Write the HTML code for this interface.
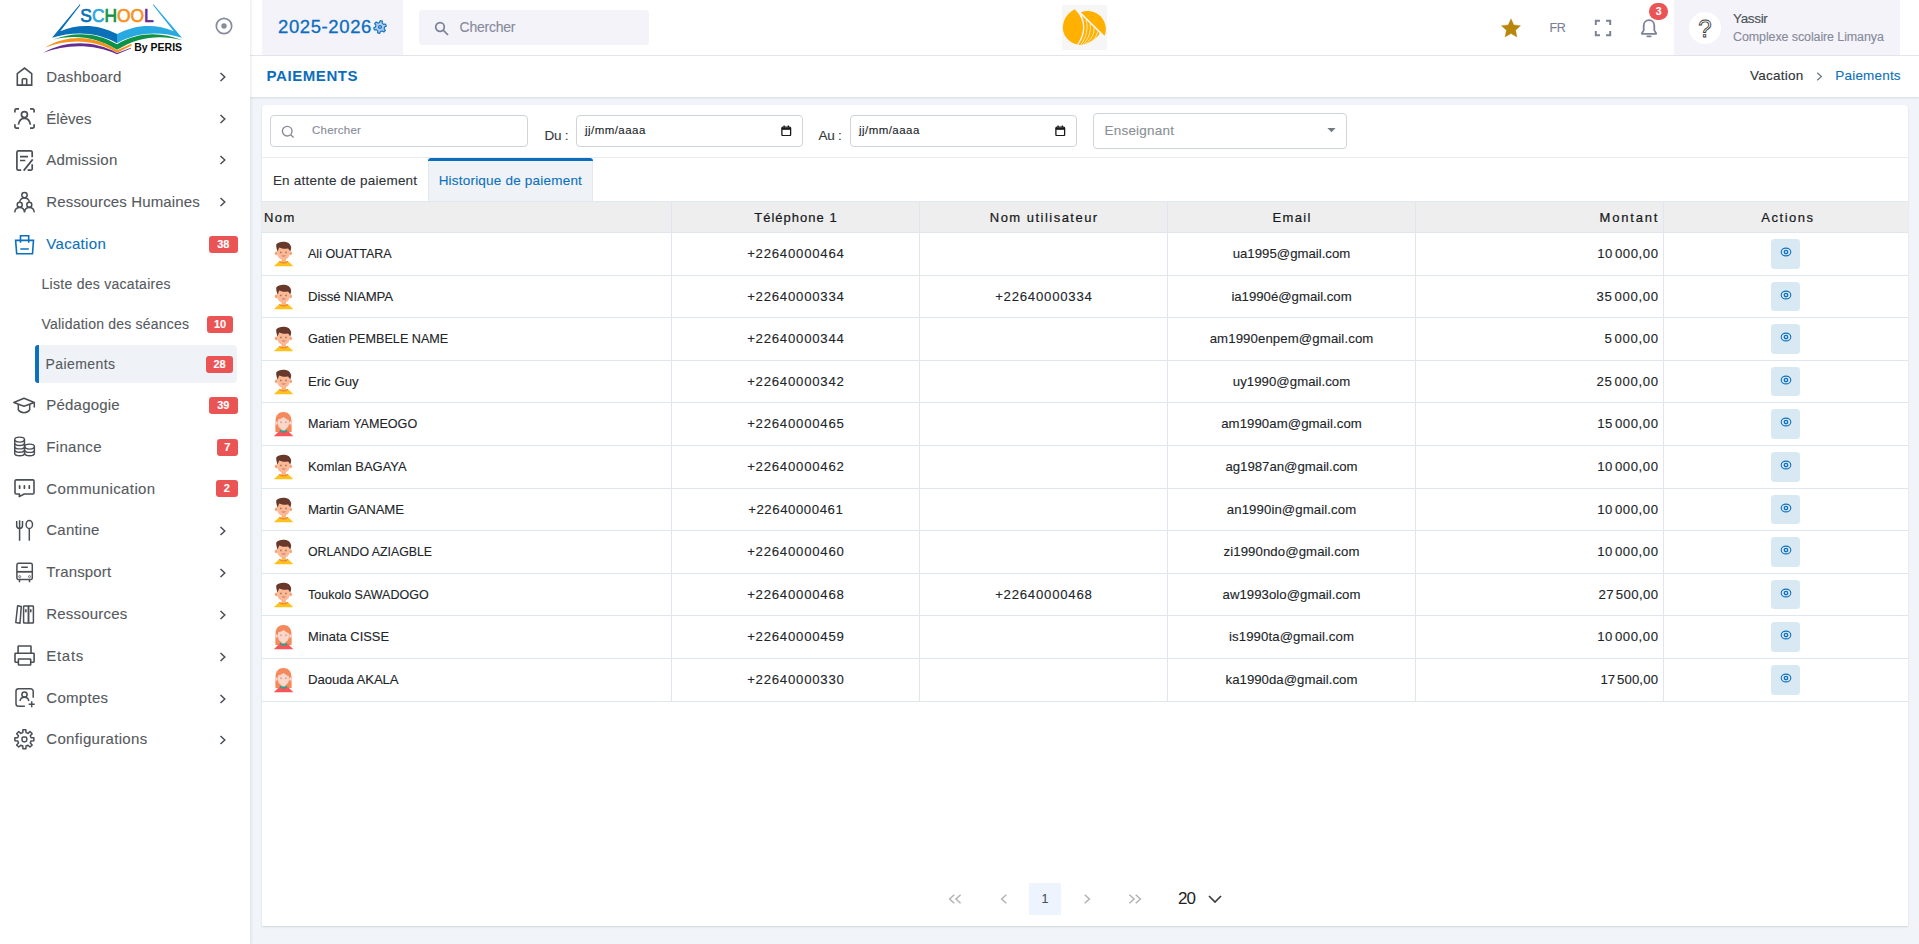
<!DOCTYPE html>
<html lang="fr"><head>
<meta charset="utf-8">
<title>Paiements</title>
<style>
*{box-sizing:border-box;margin:0;padding:0}
html,body{width:1919px;height:944px;overflow:hidden}
body{-webkit-text-stroke:.12px;font-family:"Liberation Sans",sans-serif;background:#f1f5f9;color:#333;position:relative;font-size:14px}
svg{display:block}
/* ---------- sidebar ---------- */
#sidebar{position:absolute;left:0;top:0;width:250px;height:944px;background:#fff;box-shadow:1px 0 3px rgba(56,65,74,.12);z-index:5}
#logo{position:absolute;left:40px;top:2px;width:146px;height:54px}
#toggle{position:absolute;left:213.500px;top:15.900px;width:20px;height:20px}
.nav{position:absolute;left:0;width:250px;height:42px}
.nav .ic{position:absolute;left:8px;top:3px;width:36px;height:36px;color:#4a4f55}
.nav .lb{position:absolute;left:46.300px;top:0;line-height:42px;font-size:15px;color:#565a60;white-space:nowrap;}
.nav .ch{position:absolute;left:219px;top:16px;width:8px;height:10px}
.nav.act .lb,.nav.act .ic{color:#0c71bc}
.bdg{position:absolute;background:#ea5455;color:#fff;font-weight:700;font-size:11px;line-height:17px;height:17px;border-radius:3px;text-align:center}
.sub{position:absolute;left:35px;width:202px;height:38px}
.sub .lb{position:absolute;left:6.500px;top:0;line-height:38px;font-size:14px;color:#565a60;white-space:nowrap;}
.sub.cur{background:#eff2f7;border-left:4px solid #0c71bc;border-radius:3px 4px 4px 3px}
/* ---------- header ---------- */
#header{position:absolute;left:250px;top:0;width:1669px;height:56px;background:#fff;border-bottom:1px solid #e4e8ee}
#year{position:absolute;left:12px;top:0;width:141px;height:55px;background:#f3f3f9}
#year .t{position:absolute;left:16px;top:0;line-height:54px;font-size:18.500px;color:#0c6dbf;-webkit-text-stroke:.3px #0c6dbf;white-space:nowrap}
#year svg{position:absolute;left:111px;top:20px;width:14px;height:14px}
#hsearch{position:absolute;left:169px;top:10px;width:230px;height:35px;background:#f3f3f9;border-radius:4px}
#hsearch svg{position:absolute;left:14.700px;top:11.300px;width:15px;height:15px}
#hsearch .t{position:absolute;left:40.5px;top:0;line-height:35px;font-size:14px;color:#878a99;}
#brand{position:absolute;left:812px;top:5px;width:45px;height:45px;background:#f6f6f6}
#star{position:absolute;left:1251px;top:18px;width:20px;height:20px}
#lang{position:absolute;left:1299.500px;top:0;line-height:57px;font-size:12.500px;color:#7c8293}
#fs{position:absolute;left:1343px;top:18px;width:20px;height:20px}
#bell{position:absolute;left:1389px;top:17px;width:20px;height:22px}
#bellb{position:absolute;left:1399px;top:3.100px;width:19.400px;height:16.600px;border-radius:8.300px;background:#ea5455;color:#fff;font-size:10.500px;font-weight:700;line-height:16px;text-align:center}
#user{position:absolute;left:1424px;top:0;width:226px;height:55px;background:#f3f3f9}
#user .av{position:absolute;left:15px;top:12px;width:32px;height:32px;border-radius:50%;background:#fff}
#user .n{position:absolute;left:59px;top:11px;font-size:13.5px;color:#4d5157;line-height:16px}
#user .s{position:absolute;left:59px;top:30px;font-size:12.5px;color:#878a99;line-height:15px;white-space:nowrap}
/* ---------- title bar ---------- */
#tbar{position:absolute;left:250px;top:56px;width:1669px;height:41px;background:#fff;box-shadow:0 1px 2px rgba(56,65,74,.15)}
#tbar h4{position:absolute;left:16.500px;top:0;line-height:39.500px;font-size:15px;font-weight:700;-webkit-text-stroke:0;color:#0c6dbd}
#crumb{position:absolute;left:0;top:0;width:1669px;height:40px;font-size:13.500px;color:#2f3337}
#crumb .c{position:absolute;top:0;line-height:39px;white-space:nowrap}
#crumb svg{position:absolute;left:1566.300px;top:15.500px;width:7px;height:9px}
#crumb b{font-weight:400;color:#0c71bc}
#crumb i{font-style:normal;color:#6c757d;margin:0 10px;font-size:12px}
/* ---------- card ---------- */
#card{position:absolute;left:262px;top:105px;width:1646px;height:821px;background:#fff;border-radius:4px 4px 0 0;box-shadow:0 1px 2px rgba(56,65,74,.18)}

#filters{position:absolute;left:0;top:0;width:1646px;height:53px;border-bottom:1px solid #e9ebee}
.inp{position:absolute;top:10px;height:32px;border:1px solid #ced4da;border-radius:4px;background:#fff}
.inp>svg{position:absolute;left:10px;top:9px;width:14px;height:14px}
.inp .ph{position:absolute;top:0;line-height:28px;font-size:11.500px;color:#878a99;}
.inp .dv{position:absolute;left:8px;top:0;line-height:28px;font-size:11.500px;color:#212529;letter-spacing:.25px}
.inp svg.cal{left:204px;top:8.500px;width:10.500px;height:11.500px}
.fl{position:absolute;top:22px;line-height:18px;font-size:13.500px;color:#33383d;white-space:nowrap}
.sel{position:absolute;left:831px;top:8px;width:254px;height:36px;border:1px solid #ced4da;border-radius:4px}
.sel span{position:absolute;left:10.500px;top:0;line-height:34px;font-size:13.500px;color:#8b8f96;letter-spacing:.25px}
.sel svg{position:absolute;left:233px;top:14px;width:9px;height:4.500px}
#tabs{position:absolute;left:0;top:53px;width:1646px;height:43.500px;border-bottom:1px solid #e3e6ea}
.tab{position:absolute;top:0;height:43px;line-height:45px;text-align:center;font-size:13.500px;color:#2f3337;white-space:nowrap;letter-spacing:.1px}
.tab.on{color:#0c71bc;background:#eff3f8;border-top:3px solid #0c6dbd;line-height:39px;border-radius:3px 3px 0 0;box-shadow:inset 1px 0 #e3e8ef,inset -1px 0 #e3e8ef}
#thead{position:absolute;left:0;top:96px;width:1646px;height:32px;background:#eee;border-top:1px solid #e3e8f0;border-bottom:1px solid #e0e6f0}
.th{position:absolute;top:0;height:30px;line-height:32px;text-align:center;font-size:13px;font-weight:400;-webkit-text-stroke:.22px #16181b;color:#16181b;border-right:1px solid #e0e6f0;white-space:nowrap}
#tbody{position:absolute;left:0;top:128px;width:1646px}
.tr{position:absolute;left:0;width:1646px;border-bottom:1px solid #e0e6f0}
.td{position:absolute;top:0;height:100%;text-align:center;font-size:13.200px;color:#212529;-webkit-text-stroke:.12px #212529;white-space:nowrap;border-right:1px solid #e0e6f0}
.c1{left:0;width:410px;text-align:left}.c2{left:410px;width:248px}.c3{left:658px;width:248px}.c4{left:906px;width:248px}.c5{left:1154px;width:248px;text-align:right;padding-right:5px;word-spacing:-2.200px}.c6{left:1402px;width:244px;border-right:0}
.avt{position:absolute;left:10px;top:calc(50% - 14px);width:24px;height:28px}
.nm{position:absolute;left:46px;top:0}
.eye{position:absolute;left:107px;top:calc(50% - 15px);width:29px;height:29.500px;background:#d9e9f4;border-radius:3.500px}
.eye svg{position:absolute;left:8.800px;top:8.300px;width:12px;height:10px}
#pager{position:absolute;left:0;top:778px;width:1646px;height:32px}
.pg{position:absolute;top:11px;height:10px;fill:none;stroke:#b3b3b3;stroke-width:1.500}
#pager .cur{position:absolute;left:767px;top:0;width:32px;height:32px;background:#eef4fd;line-height:33px;text-align:center;font-size:12.500px;color:#495057}
#pager .per{-webkit-text-stroke:0;position:absolute;left:916px;top:0;line-height:32px;font-size:17px;color:#222;letter-spacing:-.4px}
#pager svg.dn{position:absolute;left:946px;top:12px;width:14px;height:8px}
em{font-style:normal;display:inline-block}
</style>
</head>
<body>
<div id="sidebar">
<svg id="logo" viewBox="0 0 160 60" style="left:36px;top:0;width:160px;height:60px;position:absolute">
<path fill="#0a70b8" d="M16 37.800 43.800 4.300 44.400 5 24.300 31.300C42 23.500 62 24 81 34V43.300C60 31.500 38 31.500 16 37.800Z"></path>
<path fill="#29a9e1" d="M146 37.800 117.500 4.300 116.900 5 137.700 31.300C120 23.500 100 24 81 34V43.300C102 31.500 124 31.500 146 37.800Z"></path>
<path fill="#0e9247" d="M16.500 39.800C38 31.500 60 32 81 44.300 102 32 124 31.500 146.500 40.300 124 34.200 102 36.700 81 49.800 60 36.700 38 34.200 16.500 39.800Z"></path>
<path fill="#f6921e" d="M9 47.800C30 34.500 58 34.500 81 50.200L95.500 43.800V45.600L81 52.800C58 38.800 32 38.800 9 47.800Z"></path>
<path fill="#662d91" d="M7.300 52.700C30 40.100 58 40.100 81 52.900L95 47.700V48.600L81 54.200C58 43.900 30 43.900 7.300 52.700Z"></path>
<text y="22.300" font-family="Liberation Sans, sans-serif" font-size="18.400" textLength="73.500" lengthAdjust="spacingAndGlyphs" x="44.300" stroke-width=".7"><tspan fill="#0a70b8" stroke="#0a70b8">S</tspan><tspan fill="#29a9e1" stroke="#29a9e1">C</tspan><tspan fill="#0e9247" stroke="#0e9247">H</tspan><tspan fill="#f6921e" stroke="#f6921e">OO</tspan><tspan fill="#662d91" stroke="#662d91">L</tspan></text>
<text x="98.300" y="51" font-family="Liberation Sans, sans-serif" font-weight="700" font-size="11.800" textLength="47.800" lengthAdjust="spacingAndGlyphs" fill="#0a0a0a">By PERIS</text>
</svg>

<svg id="toggle" viewBox="0 0 20 20" fill="none" stroke="#878ba0" stroke-width="1.700"><circle cx="10" cy="10" r="7.700"></circle><circle cx="10" cy="10" r="2.700" fill="#878ba0" stroke="none"></circle></svg>
<div class="nav" style="top:56px"><svg class="ic" viewBox="0 0 36 36" fill="none" stroke="currentColor" stroke-width="1.6" stroke-linejoin="miter"><path d="M9.300 26.100V14.600L16.500 9 23.700 14.600V26.100Z"></path><path d="M14.300 26V20.600a.8.8 0 0 1 .8-.8h2.800a.8.8 0 0 1 .8.8V26"></path></svg><span class="lb" style="letter-spacing: 0.2px;">Dashboard</span><svg class="ch" viewBox="0 0 8 10" fill="none" stroke="#4a4f55" stroke-width="1.5"><path d="M1.5 1 5.8 5 1.5 9"></path></svg></div>
<div class="nav" style="top:98px"><svg class="ic" viewBox="0 0 36 36" fill="none" stroke="currentColor" stroke-width="1.7"><path d="M6.9 11.5V9.4A1.5 1.5 0 0 1 8.4 7.9H11M22 7.9h2.6a1.5 1.5 0 0 1 1.5 1.5v2.1M26.1 23.3v2.300a1.5 1.500 0 0 1-1.500 1.500H22M11 27.100H8.400a1.500 1.500 0 0 1-1.500-1.500V23.300"></path><circle cx="16.400" cy="13.600" r="3"></circle><path d="M10.4 23.700c.6-4.200 3-6.300 6-6.300s5.400 2.100 6 6.300"></path></svg><span class="lb" style="letter-spacing: 0.02px;">Élèves</span><svg class="ch" viewBox="0 0 8 10" fill="none" stroke="#4a4f55" stroke-width="1.5"><path d="M1.500 1 5.800 5 1.500 9"></path></svg></div>
<div class="nav" style="top:139px"><svg class="ic" viewBox="0 0 36 36" fill="none" stroke="currentColor" stroke-width="1.7"><path d="M24.200 15.300V10.400a1.500 1.500 0 0 0-1.500-1.500H10.400a1.500 1.500 0 0 0-1.500 1.500V26.700a1.500 1.500 0 0 0 1.500 1.500h2.800M19.600 28.200h3.100a1.500 1.500 0 0 0 1.500-1.500V22.200"></path><path d="M12 14.600h8M12 18.500h5.300M24.700 17.400 15.700 28.600"></path></svg><span class="lb" style="letter-spacing: 0.22px;">Admission</span><svg class="ch" viewBox="0 0 8 10" fill="none" stroke="#4a4f55" stroke-width="1.5"><path d="M1.500 1 5.800 5 1.500 9"></path></svg></div>
<div class="nav" style="top:181px"><svg class="ic" viewBox="0 0 36 36" fill="none" stroke="currentColor" stroke-width="1.500"><circle cx="16.500" cy="11.100" r="2.700"></circle><path d="M11.600 17.700c.7-2.400 2.400-3.700 4.900-3.700s4.200 1.300 4.900 3.700"></path><circle cx="11.700" cy="20.800" r="2.500"></circle><circle cx="21.300" cy="20.800" r="2.500"></circle><path d="M6.700 28.300c.4-3 2.200-4.700 5-4.700s4.400 1.700 4.800 4.700c.4-3 2-4.700 4.800-4.700s4.600 1.700 5 4.700"></path></svg><span class="lb" style="letter-spacing: 0.14px;">Ressources Humaines</span><svg class="ch" viewBox="0 0 8 10" fill="none" stroke="#4a4f55" stroke-width="1.500"><path d="M1.500 1 5.800 5 1.500 9"></path></svg></div>
<div class="nav act" style="top:223px"><svg class="ic" viewBox="0 0 36 36" fill="none" stroke="currentColor" stroke-width="1.600"><path d="M7.600 14.400H25.500L24.500 27.800H8.700Z"></path><path d="M12.500 16.800V9.700h8.200v7.100M12.300 23h8.500"></path></svg><span class="lb" style="letter-spacing: 0.31px;">Vacation</span><span class="bdg" style="left:209px;top:12.600px;width:28.500px">38</span></div>
<div class="sub" style="top:265px"><span class="lb" style="letter-spacing: 0.28px;">Liste des vacataires</span></div>
<div class="sub" style="top:305px"><span class="lb" style="letter-spacing: 0.22px;">Validation des séances</span><span class="bdg" style="left:172px;top:11.200px;width:26px">10</span></div>
<div class="sub cur" style="top:345px"><span class="lb" style="letter-spacing: 0.42px;">Paiements</span><span class="bdg" style="left:167px;top:10.500px;width:27px">28</span></div>
<div class="nav" style="top:384px"><svg class="ic" viewBox="0 0 36 36" fill="none" stroke="currentColor" stroke-width="1.500" stroke-linejoin="round"><path d="M5.800 15.500 16 11.200 26.300 15.500 16 19.300Z"></path><path d="M26.300 15.500v5M10.300 17.400v5.400c1.400 2 3.400 3 5.700 3s4.300-1 5.700-3V17.400"></path></svg><span class="lb" style="letter-spacing: 0.21px;">Pédagogie</span><span class="bdg" style="left:209px;top:12.600px;width:28.500px">39</span></div>
<div class="nav" style="top:426px"><svg class="ic" viewBox="0 0 36 36" fill="none" stroke="currentColor" stroke-width="1.400"><ellipse cx="11.600" cy="10.600" rx="4.900" ry="2.500"></ellipse><path d="M6.700 10.600V24.300c0 1.400 2.200 2.500 4.900 2.500s4.900-1.100 4.900-2.500V10.600"></path><path d="M6.700 14c0 1.400 2.200 2.500 4.900 2.500s4.900-1.100 4.900-2.500M6.700 17.400c0 1.400 2.200 2.500 4.900 2.500s4.900-1.100 4.900-2.500M6.700 20.800c0 1.400 2.200 2.500 4.900 2.500s4.900-1.100 4.900-2.500"></path><ellipse cx="21.600" cy="17.600" rx="4.800" ry="2.500"></ellipse><path d="M26.400 17.600v6.700c0 1.400-2.100 2.500-4.800 2.500s-4.800-1.100-4.800-2.500"></path><path d="M16.800 20.900c0 1.400 2.100 2.500 4.800 2.500s4.800-1.100 4.800-2.500"></path></svg><span class="lb" style="letter-spacing: 0.31px;">Finance</span><span class="bdg" style="left:217px;top:12.500px;width:20.500px">7</span></div>
<div class="nav" style="top:468px"><svg class="ic" viewBox="0 0 36 36" fill="none" stroke="currentColor" stroke-width="1.600" stroke-linejoin="round"><path d="M8.200 8.900H24.800a1.200 1.200 0 0 1 1.200 1.200V21.800a1.200 1.200 0 0 1-1.200 1.200H16.200L11.300 25.600 11.500 23H8.200A1.200 1.200 0 0 1 7 21.800V10.100A1.200 1.200 0 0 1 8.200 8.900Z"></path><path d="M11.600 14.800v2.400M16.400 14.800v2.400M21.300 14.800v2.400" stroke-width="1.700" stroke-linecap="round"></path></svg><span class="lb" style="letter-spacing: 0.39px;">Communication</span><span class="bdg" style="left:216px;top:12.400px;width:21.500px">2</span></div>
<div class="nav" style="top:509px"><svg class="ic" viewBox="0 0 36 36" fill="none" stroke="currentColor" stroke-width="1.500"><path d="M11.600 8.200V28.700M8.700 9v4.400c0 2 1.200 3 2.900 3s2.900-1 2.900-3V9"></path><ellipse cx="21.300" cy="12.500" rx="3.200" ry="4.100"></ellipse><path d="M21.300 16.600V28.700"></path></svg><span class="lb" style="letter-spacing: 0.22px;">Cantine</span><svg class="ch" style="top:16.900px" viewBox="0 0 8 10" fill="none" stroke="#4a4f55" stroke-width="1.500"><path d="M1.500 1 5.800 5 1.500 9"></path></svg></div>
<div class="nav" style="top:551px"><svg class="ic" viewBox="0 0 36 36" fill="none" stroke="currentColor" stroke-width="1.500"><rect x="8.900" y="9.300" width="15.400" height="16.300" rx="1.700"></rect><path d="M8.900 17.800H24.300" stroke-width="1.800"></path><path d="M13.200 13.200h6.600M11.500 25.600v2.600M21.500 25.600v2.600"></path><circle cx="11.700" cy="22.600" r="1" stroke-width=".8"></circle><circle cx="21.500" cy="22.600" r="1" stroke-width=".8"></circle></svg><span class="lb" style="letter-spacing: 0.15px;">Transport</span><svg class="ch" style="top:16.900px" viewBox="0 0 8 10" fill="none" stroke="#4a4f55" stroke-width="1.500"><path d="M1.500 1 5.800 5 1.500 9"></path></svg></div>
<div class="nav" style="top:593px"><svg class="ic" viewBox="0 0 36 36" fill="none" stroke="currentColor" stroke-width="1.500" stroke-linejoin="round"><path d="M9.600 9.800 13.300 10.400 12 27.300 7.800 26.500Z"></path><rect x="15.600" y="9.900" width="4.900" height="17.200" rx=".6"></rect><rect x="20.500" y="9.900" width="4.900" height="17.200" rx=".6"></rect><path d="M17.900 13.900v1.800M22.800 13.900v1.800" stroke-width="1.600" stroke-linecap="round"></path></svg><span class="lb" style="letter-spacing: 0.19px;">Ressources</span><svg class="ch" style="top:16.900px" viewBox="0 0 8 10" fill="none" stroke="#4a4f55" stroke-width="1.500"><path d="M1.500 1 5.800 5 1.500 9"></path></svg></div>
<div class="nav" style="top:635px"><svg class="ic" viewBox="0 0 36 36" fill="none" stroke="currentColor" stroke-width="1.600" stroke-linejoin="round"><path d="M10.100 15.300V8.600a.6.600 0 0 1 .6-.6H22.400a.6.600 0 0 1 .6.600V15.300"></path><path d="M10.400 24.200H7.600a.6.600 0 0 1-.6-.6V15.900a.6.600 0 0 1 .6-.6H25.500a.6.600 0 0 1 .6.600v7.700a.6.600 0 0 1-.6.600H22.700"></path><rect x="10.400" y="21" width="12.300" height="6" rx=".6"></rect></svg><span class="lb" style="letter-spacing: 0.7px;">Etats</span><svg class="ch" style="top:16.900px" viewBox="0 0 8 10" fill="none" stroke="#4a4f55" stroke-width="1.500"><path d="M1.500 1 5.800 5 1.500 9"></path></svg></div>
<div class="nav" style="top:677px"><svg class="ic" viewBox="0 0 36 36" fill="none" stroke="currentColor" stroke-width="1.500"><path d="M25.200 17.800V11.300a2.500 2.500 0 0 0-2.500-2.500H10.500A2.500 2.500 0 0 0 8 11.300V23.700a2.500 2.500 0 0 0 2.500 2.500h6.400"></path><circle cx="16.500" cy="14.500" r="2.600"></circle><path d="M12 21c.4-2.500 2-3.800 4.400-3.800s4 1.300 4.400 3.800M23.700 21.200v6M20.700 24.200h6"></path></svg><span class="lb" style="letter-spacing: 0.28px;">Comptes</span><svg class="ch" style="top:16.900px" viewBox="0 0 8 10" fill="none" stroke="#4a4f55" stroke-width="1.500"><path d="M1.500 1 5.800 5 1.500 9"></path></svg></div>
<div class="nav" style="top:718px"><svg class="ic" viewBox="0 0 36 36" fill="none" stroke="currentColor" stroke-width="1.500" stroke-linejoin="round"><path d="M14.79 11.59 L14.90 8.82 L17.90 8.82 L18.01 11.59 L20.01 12.42 L22.04 10.53 L24.17 12.66 L22.28 14.69 L23.11 16.69 L25.88 16.80 L25.88 19.80 L23.11 19.91 L22.28 21.91 L24.17 23.94 L22.04 26.07 L20.01 24.18 L18.01 25.01 L17.90 27.78 L14.90 27.78 L14.79 25.01 L12.79 24.18 L10.76 26.07 L8.63 23.94 L10.52 21.91 L9.69 19.91 L6.92 19.80 L6.92 16.80 L9.69 16.69 L10.52 14.69 L8.63 12.66 L10.76 10.53 L12.79 12.42Z"></path><rect x="14" y="15.900" width="4.800" height="4.800" rx="1.600"></rect></svg><span class="lb" style="letter-spacing: 0.32px;">Configurations</span><svg class="ch" style="top:16.900px" viewBox="0 0 8 10" fill="none" stroke="#4a4f55" stroke-width="1.500"><path d="M1.500 1 5.800 5 1.500 9"></path></svg></div>

</div>
<div id="header">
<div id="year"><span class="t" style="letter-spacing: 0.61px;">2025-2026</span><svg viewBox="0 0 14 14" fill="#1976c4" fill-opacity=".3" fill-rule="evenodd" stroke="#1976c4" stroke-width="1.200" stroke-linejoin="round"><path d="M6.53 2.52 L7.20 0.70 L9.38 1.17 L9.25 3.10 L10.64 4.35 L12.55 4.02 L13.24 6.14 L11.50 7.00 L11.11 8.83 L12.35 10.32 L10.86 11.98 L9.25 10.90 L7.47 11.48 L6.80 13.30 L4.62 12.83 L4.75 10.90 L3.36 9.65 L1.45 9.98 L0.76 7.86 L2.50 7.00 L2.89 5.17 L1.65 3.68 L3.14 2.02 L4.75 3.10Z"></path><circle cx="7" cy="7" r="1.500"></circle></svg></div>
<div id="hsearch"><svg viewBox="0 0 15 15" fill="none" stroke="#7c8293" stroke-width="1.700"><circle cx="6" cy="6" r="4.300"></circle><path d="M9.200 9.200 14 14"></path></svg><span class="t" style="letter-spacing: -0.23px;">Chercher</span></div>
<div id="brand"><svg viewBox="0 0 45 45" width="45" height="45"><g fill="#ffb000"><path d="M12.600 4.200C4 9 .9 16 .9 23 .9 30 6 37 15 39.600 19.500 33 21 27 21 22 21 16 18 9 12.600 4.200Z"></path><path d="M18.800 7.300C26 4.500 35 6.500 40 13 44 18.500 45 25 42.600 30.800Z"></path><path d="M19.600 10.500 37.800 28.300C34 35 26 40 16.300 39.900 21 33 22.500 27 22.300 22 22.200 18 21.500 14 19.600 10.500Z"></path></g><g fill="none" stroke="#fff" stroke-width=".7"><path d="M24 15c2.500 8 .5 17-5 24.500"></path><path d="M28 19c1.500 7-1.500 15-7 20.500"></path><path d="M32 23c.5 6-3 12-9 16.300"></path><path d="M35.500 26.500c-.5 5-4.500 9.500-9.500 12"></path></g></svg></div>
<svg id="star" viewBox="0 0 20 20"><path fill="#b8860b" d="M10 .8 12.800 6.900 19.500 7.700 14.600 12.300 15.900 18.900 10 15.600 4.100 18.900 5.400 12.300 .5 7.700 7.200 6.900Z" stroke="#b8860b" stroke-width=".4" stroke-linejoin="round"></path></svg>
<span id="lang" style="letter-spacing: -0.36px;">FR</span>
<svg id="fs" viewBox="0 0 20 20" fill="none" stroke="#7d8397" stroke-width="2"><path d="M2.800 7V2.800H7M13 2.800h4.200V7M17.200 13v4.200H13M7 17.200H2.800V13"></path></svg>
<svg id="bell" viewBox="0 0 20 22" fill="none" stroke="#7d8397" stroke-width="1.800" stroke-linejoin="round"><path d="M10 3.200c-3.200 0-5.300 2.500-5.300 5.600v4.600L2.900 16.300v.5H17.100v-.5L15.300 13.400V8.800C15.300 5.700 13.200 3.200 10 3.200Z"></path><path d="M8.300 19.300h3.400" stroke-linecap="round"></path></svg>
<span id="bellb">3</span>
<div id="user"><span class="av"><svg viewBox="0 0 32 32" width="32" height="32"><text x="16" y="24.800" text-anchor="middle" font-family="Liberation Sans, sans-serif" font-size="24" fill="#fff" stroke="#3a3a3a" stroke-width=".9">?</text></svg></span><span class="n" style="letter-spacing: -0.33px;">Yassir</span><span class="s" style="letter-spacing: -0.11px;">Complexe scolaire Limanya</span></div>

</div>
<div id="tbar"><h4 style="letter-spacing: 0.58px;">PAIEMENTS</h4><div id="crumb"><span class="c" style="left: 1500px; letter-spacing: 0.25px;">Vacation</span><svg viewBox="0 0 7 9" fill="none" stroke="#6c757d" stroke-width="1.200"><path d="M1.200 .8 5.400 4.500 1.200 8.200"></path></svg><b class="c" style="left: 1585.3px; letter-spacing: 0.19px;">Paiements</b></div></div>
<div id="card">
<div id="filters">
<div class="inp" style="left:8px;width:258px"><svg viewBox="0 0 14 14" fill="none" stroke="#878a99" stroke-width="1.400"><circle cx="6.200" cy="6.200" r="4.800"></circle><path d="M9.700 9.700 12.600 12.600"></path></svg><span class="ph" style="left: 41px; letter-spacing: 0.23px;">Chercher</span></div>
<span class="fl" style="left: 282.5px; letter-spacing: -0.28px;">Du :</span>
<div class="inp" style="left:314px;width:227px"><span class="dv" style="letter-spacing: 0.45px;">jj/mm/aaaa</span><svg class="cal" viewBox="0 0 12 13" fill="none" stroke="#1a1a1a"><rect x="1" y="2.300" width="10" height="9.700" rx="1.200" stroke-width="1.500"></rect><path d="M1 4.300h10" stroke-width="2.300"></path><path d="M3.600 .6v2.200M8.400 .6v2.200" stroke-width="1.500"></path></svg></div>
<span class="fl" style="left: 556.5px; letter-spacing: -0.23px;">Au :</span>
<div class="inp" style="left:588px;width:227px"><span class="dv" style="letter-spacing: 0.45px;">jj/mm/aaaa</span><svg class="cal" viewBox="0 0 12 13" fill="none" stroke="#1a1a1a"><rect x="1" y="2.300" width="10" height="9.700" rx="1.200" stroke-width="1.500"></rect><path d="M1 4.300h10" stroke-width="2.300"></path><path d="M3.600 .6v2.200M8.400 .6v2.200" stroke-width="1.500"></path></svg></div>
<div class="sel"><span style="letter-spacing: 0.21px;">Enseignant</span><svg viewBox="0 0 12 6"><path d="M.5 0h11L6 5.800Z" fill="#757a82"></path></svg></div>
</div>
<div id="tabs"><span class="tab" style="left:0;width:166px"><em style="letter-spacing: 0.22px; margin-right: -0.22px;">En attente de paiement</em></span><span class="tab on" style="left:166px;width:164.500px"><em style="letter-spacing: 0.21px; margin-right: -0.21px;">Historique de paiement</em></span></div>
<div id="thead"><span class="th" style="left:0;width:410px;text-align:left;padding-left:2px"><em style="letter-spacing: 1.38px; margin-right: -1.38px;">Nom</em></span><span class="th" style="left:410px;width:248px"><em style="letter-spacing: 1.02px; margin-right: -1.02px;">Téléphone 1</em></span><span class="th" style="left:658px;width:248px"><em style="letter-spacing: 1.48px; margin-right: -1.48px;">Nom utilisateur</em></span><span class="th" style="left:906px;width:248px"><em style="letter-spacing: 1.34px; margin-right: -1.34px;">Email</em></span><span class="th" style="left:1154px;width:248px;text-align:right;padding-right:5.500px"><em style="letter-spacing: 1.84px; margin-right: -1.84px;">Montant</em></span><span class="th" style="left:1402px;width:244px;border-right:0;padding-left:2.500px"><em style="letter-spacing: 1.52px; margin-right: -1.52px;">Actions</em></span></div>
<div id="tbody">
<div class="tr" style="top:0px;height:43px;line-height:42px"><span class="td c1"><svg class="avt" viewBox="7 5 24 28"><path fill="#fbb08a" d="M16.600 22.500h4.300v4.200h-4.300z"></path><ellipse cx="11.300" cy="18.300" rx="1.500" ry="1.900" fill="#f6a47c"></ellipse><ellipse cx="25.500" cy="18.300" rx="1.500" ry="1.900" fill="#f6a47c"></ellipse><path fill="#fdb994" d="M12.400 10.500h12.100v8.500c0 3.200-2.700 5.600-6.050 5.600S12.400 22.200 12.400 19Z"></path><path fill="#68392b" d="M11.200 9.600C13 7.300 16 6.500 19.500 6.800c3.500.3 6 2.200 6.600 5.200.3 1.800-.5 3.600-1 4.800-.7-1.600-1.200-2.800-2.200-3.300-2.400.6-5.600.6-8.600-.9-.7 1.100-1.300 2.600-1.600 4.200-.9-2-1.600-4.700-1.500-7.200Z"></path><ellipse cx="15.900" cy="17.400" rx=".7" ry=".9" fill="#8a6a5c"></ellipse><ellipse cx="21" cy="17.400" rx=".7" ry=".9" fill="#8a6a5c"></ellipse><path fill="#d98a7c" d="M16.500 20.300h4.300c-.3 1.100-1.200 1.600-2.150 1.600s-1.850-.5-2.150-1.600Z"></path><path fill="#fdc11c" d="M14.200 26.200h9L28.400 31.200H8.800Z"></path><path fill="none" stroke="#f2625c" stroke-width="1" d="M14.400 26.400c1.300 1.100 2.700 1.500 4.200 1.500s3-.4 4.300-1.500"></path></svg><span class="nm" style="transform: scaleX(0.949); transform-origin: 0px 50%;">Ali OUATTARA</span></span><span class="td c2"><em style="letter-spacing: 0.76px; margin-right: -0.76px;">+22640000464</em></span><span class="td c3"></span><span class="td c4"><em style="letter-spacing: 0.01px; margin-right: -0.01px;">ua1995@gmail.com</em></span><span class="td c5"><em style="letter-spacing: 0.54px; margin-right: -0.54px;">10&nbsp;000,00</em></span><span class="td c6"><span class="eye"><svg viewBox="0 0 12 10" fill="none" stroke="#0f70bd"><ellipse cx="6" cy="5" rx="4.800" ry="3.900" stroke-width="1.100"></ellipse><circle cx="6" cy="5" r="1.700" stroke-width="1.300"></circle></svg></span></span></div>
<div class="tr" style="top:43px;height:42px;line-height:41px"><span class="td c1"><svg class="avt" viewBox="7 5 24 28"><path fill="#fbb08a" d="M16.600 22.500h4.300v4.200h-4.300z"></path><ellipse cx="11.300" cy="18.300" rx="1.500" ry="1.900" fill="#f6a47c"></ellipse><ellipse cx="25.500" cy="18.300" rx="1.500" ry="1.900" fill="#f6a47c"></ellipse><path fill="#fdb994" d="M12.400 10.500h12.100v8.500c0 3.200-2.700 5.600-6.050 5.600S12.400 22.200 12.400 19Z"></path><path fill="#68392b" d="M11.200 9.600C13 7.300 16 6.500 19.500 6.800c3.500.3 6 2.200 6.600 5.200.3 1.800-.5 3.600-1 4.800-.7-1.600-1.200-2.800-2.200-3.300-2.400.6-5.600.6-8.600-.9-.7 1.100-1.300 2.600-1.600 4.200-.9-2-1.600-4.700-1.500-7.200Z"></path><ellipse cx="15.900" cy="17.400" rx=".7" ry=".9" fill="#8a6a5c"></ellipse><ellipse cx="21" cy="17.400" rx=".7" ry=".9" fill="#8a6a5c"></ellipse><path fill="#d98a7c" d="M16.500 20.300h4.300c-.3 1.100-1.200 1.600-2.150 1.600s-1.850-.5-2.150-1.600Z"></path><path fill="#fdc11c" d="M14.200 26.200h9L28.400 31.200H8.800Z"></path><path fill="none" stroke="#f2625c" stroke-width="1" d="M14.400 26.400c1.300 1.100 2.700 1.500 4.200 1.500s3-.4 4.300-1.500"></path></svg><span class="nm" style="letter-spacing: -0.1px;">Dissé NIAMPA</span></span><span class="td c2"><em style="letter-spacing: 0.76px; margin-right: -0.76px;">+22640000334</em></span><span class="td c3"><em style="letter-spacing: 0.76px; margin-right: -0.76px;">+22640000334</em></span><span class="td c4"><em style="letter-spacing: -0.01px; margin-right: 0.01px;">ia1990é@gmail.com</em></span><span class="td c5"><em style="letter-spacing: 0.62px; margin-right: -0.62px;">35&nbsp;000,00</em></span><span class="td c6"><span class="eye"><svg viewBox="0 0 12 10" fill="none" stroke="#0f70bd"><ellipse cx="6" cy="5" rx="4.800" ry="3.900" stroke-width="1.100"></ellipse><circle cx="6" cy="5" r="1.700" stroke-width="1.300"></circle></svg></span></span></div>
<div class="tr" style="top:85px;height:43px;line-height:42px"><span class="td c1"><svg class="avt" viewBox="7 5 24 28"><path fill="#fbb08a" d="M16.600 22.500h4.300v4.200h-4.300z"></path><ellipse cx="11.300" cy="18.300" rx="1.500" ry="1.900" fill="#f6a47c"></ellipse><ellipse cx="25.500" cy="18.300" rx="1.500" ry="1.900" fill="#f6a47c"></ellipse><path fill="#fdb994" d="M12.400 10.500h12.100v8.500c0 3.200-2.700 5.600-6.050 5.600S12.400 22.200 12.400 19Z"></path><path fill="#68392b" d="M11.200 9.600C13 7.300 16 6.500 19.500 6.800c3.500.3 6 2.200 6.600 5.200.3 1.800-.5 3.600-1 4.800-.7-1.600-1.200-2.800-2.200-3.300-2.400.6-5.600.6-8.600-.9-.7 1.100-1.300 2.600-1.600 4.200-.9-2-1.600-4.700-1.500-7.200Z"></path><ellipse cx="15.900" cy="17.400" rx=".7" ry=".9" fill="#8a6a5c"></ellipse><ellipse cx="21" cy="17.400" rx=".7" ry=".9" fill="#8a6a5c"></ellipse><path fill="#d98a7c" d="M16.500 20.300h4.300c-.3 1.100-1.200 1.600-2.150 1.600s-1.850-.5-2.150-1.600Z"></path><path fill="#fdc11c" d="M14.200 26.200h9L28.400 31.200H8.800Z"></path><path fill="none" stroke="#f2625c" stroke-width="1" d="M14.400 26.400c1.300 1.100 2.700 1.500 4.200 1.500s3-.4 4.300-1.500"></path></svg><span class="nm" style="transform: scaleX(0.957); transform-origin: 0px 50%;">Gatien PEMBELE NAME</span></span><span class="td c2"><em style="letter-spacing: 0.76px; margin-right: -0.76px;">+22640000344</em></span><span class="td c3"></span><span class="td c4"><em style="letter-spacing: 0.11px; margin-right: -0.11px;">am1990enpem@gmail.com</em></span><span class="td c5"><em style="letter-spacing: 0.61px; margin-right: -0.61px;">5&nbsp;000,00</em></span><span class="td c6"><span class="eye"><svg viewBox="0 0 12 10" fill="none" stroke="#0f70bd"><ellipse cx="6" cy="5" rx="4.800" ry="3.900" stroke-width="1.100"></ellipse><circle cx="6" cy="5" r="1.700" stroke-width="1.300"></circle></svg></span></span></div>
<div class="tr" style="top:128px;height:42px;line-height:41px"><span class="td c1"><svg class="avt" viewBox="7 5 24 28"><path fill="#fbb08a" d="M16.600 22.500h4.300v4.200h-4.300z"></path><ellipse cx="11.300" cy="18.300" rx="1.500" ry="1.900" fill="#f6a47c"></ellipse><ellipse cx="25.500" cy="18.300" rx="1.500" ry="1.900" fill="#f6a47c"></ellipse><path fill="#fdb994" d="M12.400 10.500h12.100v8.500c0 3.200-2.700 5.600-6.050 5.600S12.400 22.200 12.400 19Z"></path><path fill="#68392b" d="M11.200 9.600C13 7.300 16 6.500 19.500 6.800c3.500.3 6 2.200 6.600 5.200.3 1.800-.5 3.600-1 4.800-.7-1.600-1.200-2.800-2.200-3.300-2.400.6-5.600.6-8.600-.9-.7 1.100-1.300 2.600-1.600 4.200-.9-2-1.600-4.700-1.500-7.200Z"></path><ellipse cx="15.900" cy="17.400" rx=".7" ry=".9" fill="#8a6a5c"></ellipse><ellipse cx="21" cy="17.400" rx=".7" ry=".9" fill="#8a6a5c"></ellipse><path fill="#d98a7c" d="M16.500 20.300h4.300c-.3 1.100-1.200 1.600-2.150 1.600s-1.850-.5-2.150-1.600Z"></path><path fill="#fdc11c" d="M14.200 26.200h9L28.400 31.200H8.800Z"></path><path fill="none" stroke="#f2625c" stroke-width="1" d="M14.400 26.400c1.300 1.100 2.700 1.500 4.200 1.500s3-.4 4.300-1.500"></path></svg><span class="nm" style="letter-spacing: 0px;">Eric Guy</span></span><span class="td c2"><em style="letter-spacing: 0.76px; margin-right: -0.76px;">+22640000342</em></span><span class="td c3"></span><span class="td c4"><em style="letter-spacing: 0.05px; margin-right: -0.05px;">uy1990@gmail.com</em></span><span class="td c5"><em style="letter-spacing: 0.62px; margin-right: -0.62px;">25&nbsp;000,00</em></span><span class="td c6"><span class="eye"><svg viewBox="0 0 12 10" fill="none" stroke="#0f70bd"><ellipse cx="6" cy="5" rx="4.800" ry="3.900" stroke-width="1.100"></ellipse><circle cx="6" cy="5" r="1.700" stroke-width="1.300"></circle></svg></span></span></div>
<div class="tr" style="top:170px;height:43px;line-height:42px"><span class="td c1"><svg class="avt" viewBox="7 5 24 28"><path fill="#f48a5c" d="M18.500 6.900c4.800 0 7.800 3.300 7.900 8.200.1 4 .4 8.300.2 11.900H10.500c-.3-3.600 0-7.900.1-11.900.1-4.900 3.100-8.200 7.900-8.200Z"></path><ellipse cx="11.600" cy="18" rx="1.300" ry="1.700" fill="#fcd3c5"></ellipse><ellipse cx="25.300" cy="18" rx="1.300" ry="1.700" fill="#fcd3c5"></ellipse><path fill="#fdd6ca" d="M13 14.500c1.800-.5 4.500-1.600 5.800-2.600 1.300 1.600 3.600 2.700 5.100 3v3.600c0 3.400-2.400 6.100-5.450 6.100S13 21.900 13 18.500Z"></path><path fill="#fdd6ca" d="M16.700 23.500h3.800v2.200h-3.800z"></path><ellipse cx="16" cy="17.200" rx=".7" ry="1" fill="#b89a90"></ellipse><ellipse cx="21" cy="17.200" rx=".7" ry="1" fill="#b89a90"></ellipse><path fill="#fb5558" d="M14 26.200h9.200L28.400 31.200H8.800Z"></path><path fill="#2fa190" d="M14.800 24.500c1.100.8 2.400 1.100 3.700 1.100s2.700-.3 3.800-1.100l-.3 2.300c-1 .7-2.200 1-3.500 1s-2.400-.3-3.400-1Z"></path></svg><span class="nm" style="transform: scaleX(0.953); transform-origin: 0px 50%;">Mariam YAMEOGO</span></span><span class="td c2"><em style="letter-spacing: 0.76px; margin-right: -0.76px;">+22640000465</em></span><span class="td c3"></span><span class="td c4"><em style="letter-spacing: 0.07px; margin-right: -0.07px;">am1990am@gmail.com</em></span><span class="td c5"><em style="letter-spacing: 0.54px; margin-right: -0.54px;">15&nbsp;000,00</em></span><span class="td c6"><span class="eye"><svg viewBox="0 0 12 10" fill="none" stroke="#0f70bd"><ellipse cx="6" cy="5" rx="4.800" ry="3.900" stroke-width="1.100"></ellipse><circle cx="6" cy="5" r="1.700" stroke-width="1.300"></circle></svg></span></span></div>
<div class="tr" style="top:213px;height:43px;line-height:42px"><span class="td c1"><svg class="avt" viewBox="7 5 24 28"><path fill="#fbb08a" d="M16.600 22.500h4.300v4.200h-4.300z"></path><ellipse cx="11.300" cy="18.300" rx="1.500" ry="1.900" fill="#f6a47c"></ellipse><ellipse cx="25.500" cy="18.300" rx="1.500" ry="1.900" fill="#f6a47c"></ellipse><path fill="#fdb994" d="M12.400 10.500h12.100v8.500c0 3.200-2.700 5.600-6.050 5.600S12.400 22.200 12.400 19Z"></path><path fill="#68392b" d="M11.200 9.600C13 7.300 16 6.500 19.500 6.800c3.500.3 6 2.200 6.600 5.200.3 1.800-.5 3.600-1 4.800-.7-1.600-1.200-2.800-2.200-3.300-2.400.6-5.600.6-8.600-.9-.7 1.100-1.300 2.600-1.600 4.200-.9-2-1.600-4.700-1.500-7.200Z"></path><ellipse cx="15.900" cy="17.400" rx=".7" ry=".9" fill="#8a6a5c"></ellipse><ellipse cx="21" cy="17.400" rx=".7" ry=".9" fill="#8a6a5c"></ellipse><path fill="#d98a7c" d="M16.500 20.300h4.300c-.3 1.100-1.200 1.600-2.150 1.600s-1.850-.5-2.150-1.600Z"></path><path fill="#fdc11c" d="M14.200 26.200h9L28.400 31.200H8.800Z"></path><path fill="none" stroke="#f2625c" stroke-width="1" d="M14.400 26.400c1.300 1.100 2.700 1.500 4.200 1.500s3-.4 4.300-1.500"></path></svg><span class="nm" style="transform: scaleX(0.979); transform-origin: 0px 50%;">Komlan BAGAYA</span></span><span class="td c2"><em style="letter-spacing: 0.76px; margin-right: -0.76px;">+22640000462</em></span><span class="td c3"></span><span class="td c4"><em style="letter-spacing: 0px; margin-right: 0px;">ag1987an@gmail.com</em></span><span class="td c5"><em style="letter-spacing: 0.54px; margin-right: -0.54px;">10&nbsp;000,00</em></span><span class="td c6"><span class="eye"><svg viewBox="0 0 12 10" fill="none" stroke="#0f70bd"><ellipse cx="6" cy="5" rx="4.800" ry="3.900" stroke-width="1.100"></ellipse><circle cx="6" cy="5" r="1.700" stroke-width="1.300"></circle></svg></span></span></div>
<div class="tr" style="top:256px;height:42px;line-height:41px"><span class="td c1"><svg class="avt" viewBox="7 5 24 28"><path fill="#fbb08a" d="M16.600 22.500h4.300v4.200h-4.300z"></path><ellipse cx="11.300" cy="18.300" rx="1.500" ry="1.900" fill="#f6a47c"></ellipse><ellipse cx="25.500" cy="18.300" rx="1.500" ry="1.900" fill="#f6a47c"></ellipse><path fill="#fdb994" d="M12.400 10.500h12.100v8.500c0 3.200-2.700 5.600-6.050 5.600S12.400 22.200 12.400 19Z"></path><path fill="#68392b" d="M11.200 9.600C13 7.300 16 6.500 19.500 6.800c3.500.3 6 2.200 6.600 5.200.3 1.800-.5 3.600-1 4.800-.7-1.600-1.200-2.800-2.200-3.300-2.400.6-5.600.6-8.600-.9-.7 1.100-1.300 2.600-1.600 4.200-.9-2-1.600-4.700-1.500-7.200Z"></path><ellipse cx="15.900" cy="17.400" rx=".7" ry=".9" fill="#8a6a5c"></ellipse><ellipse cx="21" cy="17.400" rx=".7" ry=".9" fill="#8a6a5c"></ellipse><path fill="#d98a7c" d="M16.500 20.300h4.300c-.3 1.100-1.200 1.600-2.150 1.600s-1.850-.5-2.150-1.600Z"></path><path fill="#fdc11c" d="M14.200 26.200h9L28.400 31.200H8.800Z"></path><path fill="none" stroke="#f2625c" stroke-width="1" d="M14.400 26.400c1.300 1.100 2.700 1.500 4.200 1.500s3-.4 4.300-1.500"></path></svg><span class="nm" style="letter-spacing: -0.12px;">Martin GANAME</span></span><span class="td c2"><em style="letter-spacing: 0.56px; margin-right: -0.56px;">+22640000461</em></span><span class="td c3"></span><span class="td c4"><em style="letter-spacing: 0.09px; margin-right: -0.09px;">an1990in@gmail.com</em></span><span class="td c5"><em style="letter-spacing: 0.54px; margin-right: -0.54px;">10&nbsp;000,00</em></span><span class="td c6"><span class="eye"><svg viewBox="0 0 12 10" fill="none" stroke="#0f70bd"><ellipse cx="6" cy="5" rx="4.800" ry="3.900" stroke-width="1.100"></ellipse><circle cx="6" cy="5" r="1.700" stroke-width="1.300"></circle></svg></span></span></div>
<div class="tr" style="top:298px;height:43px;line-height:42px"><span class="td c1"><svg class="avt" viewBox="7 5 24 28"><path fill="#fbb08a" d="M16.600 22.500h4.300v4.200h-4.300z"></path><ellipse cx="11.300" cy="18.300" rx="1.500" ry="1.900" fill="#f6a47c"></ellipse><ellipse cx="25.500" cy="18.300" rx="1.500" ry="1.900" fill="#f6a47c"></ellipse><path fill="#fdb994" d="M12.400 10.500h12.100v8.500c0 3.200-2.700 5.600-6.050 5.600S12.400 22.200 12.400 19Z"></path><path fill="#68392b" d="M11.200 9.600C13 7.300 16 6.500 19.500 6.800c3.500.3 6 2.200 6.600 5.200.3 1.800-.5 3.600-1 4.800-.7-1.600-1.200-2.800-2.200-3.300-2.400.6-5.600.6-8.600-.9-.7 1.100-1.300 2.600-1.600 4.200-.9-2-1.600-4.700-1.500-7.200Z"></path><ellipse cx="15.900" cy="17.400" rx=".7" ry=".9" fill="#8a6a5c"></ellipse><ellipse cx="21" cy="17.400" rx=".7" ry=".9" fill="#8a6a5c"></ellipse><path fill="#d98a7c" d="M16.500 20.300h4.300c-.3 1.100-1.200 1.600-2.150 1.600s-1.850-.5-2.150-1.600Z"></path><path fill="#fdc11c" d="M14.200 26.200h9L28.400 31.200H8.800Z"></path><path fill="none" stroke="#f2625c" stroke-width="1" d="M14.400 26.400c1.300 1.100 2.700 1.500 4.200 1.500s3-.4 4.300-1.500"></path></svg><span class="nm" style="transform: scaleX(0.935); transform-origin: 0px 50%;">ORLANDO AZIAGBLE</span></span><span class="td c2"><em style="letter-spacing: 0.76px; margin-right: -0.76px;">+22640000460</em></span><span class="td c3"></span><span class="td c4"><em style="letter-spacing: 0.09px; margin-right: -0.09px;">zi1990ndo@gmail.com</em></span><span class="td c5"><em style="letter-spacing: 0.54px; margin-right: -0.54px;">10&nbsp;000,00</em></span><span class="td c6"><span class="eye"><svg viewBox="0 0 12 10" fill="none" stroke="#0f70bd"><ellipse cx="6" cy="5" rx="4.800" ry="3.900" stroke-width="1.100"></ellipse><circle cx="6" cy="5" r="1.700" stroke-width="1.300"></circle></svg></span></span></div>
<div class="tr" style="top:341px;height:42px;line-height:41px"><span class="td c1"><svg class="avt" viewBox="7 5 24 28"><path fill="#fbb08a" d="M16.600 22.500h4.300v4.200h-4.300z"></path><ellipse cx="11.300" cy="18.300" rx="1.500" ry="1.900" fill="#f6a47c"></ellipse><ellipse cx="25.500" cy="18.300" rx="1.500" ry="1.900" fill="#f6a47c"></ellipse><path fill="#fdb994" d="M12.400 10.500h12.100v8.500c0 3.200-2.700 5.600-6.050 5.600S12.400 22.200 12.400 19Z"></path><path fill="#68392b" d="M11.200 9.600C13 7.300 16 6.500 19.500 6.800c3.500.3 6 2.200 6.600 5.200.3 1.800-.5 3.600-1 4.800-.7-1.600-1.200-2.800-2.200-3.300-2.400.6-5.600.6-8.600-.9-.7 1.100-1.300 2.600-1.600 4.200-.9-2-1.600-4.700-1.500-7.200Z"></path><ellipse cx="15.900" cy="17.400" rx=".7" ry=".9" fill="#8a6a5c"></ellipse><ellipse cx="21" cy="17.400" rx=".7" ry=".9" fill="#8a6a5c"></ellipse><path fill="#d98a7c" d="M16.500 20.300h4.300c-.3 1.100-1.200 1.600-2.150 1.600s-1.850-.5-2.150-1.600Z"></path><path fill="#fdc11c" d="M14.200 26.200h9L28.400 31.200H8.800Z"></path><path fill="none" stroke="#f2625c" stroke-width="1" d="M14.400 26.400c1.300 1.100 2.700 1.500 4.200 1.500s3-.4 4.300-1.500"></path></svg><span class="nm" style="transform: scaleX(0.948); transform-origin: 0px 50%;">Toukolo SAWADOGO</span></span><span class="td c2"><em style="letter-spacing: 0.76px; margin-right: -0.76px;">+22640000468</em></span><span class="td c3"><em style="letter-spacing: 0.76px; margin-right: -0.76px;">+22640000468</em></span><span class="td c4"><em style="letter-spacing: 0.03px; margin-right: -0.03px;">aw1993olo@gmail.com</em></span><span class="td c5"><em style="letter-spacing: 0.37px; margin-right: -0.37px;">27&nbsp;500,00</em></span><span class="td c6"><span class="eye"><svg viewBox="0 0 12 10" fill="none" stroke="#0f70bd"><ellipse cx="6" cy="5" rx="4.800" ry="3.900" stroke-width="1.100"></ellipse><circle cx="6" cy="5" r="1.700" stroke-width="1.300"></circle></svg></span></span></div>
<div class="tr" style="top:383px;height:43px;line-height:42px"><span class="td c1"><svg class="avt" viewBox="7 5 24 28"><path fill="#f48a5c" d="M18.500 6.900c4.800 0 7.800 3.300 7.900 8.200.1 4 .4 8.300.2 11.900H10.500c-.3-3.600 0-7.900.1-11.900.1-4.900 3.100-8.200 7.900-8.200Z"></path><ellipse cx="11.600" cy="18" rx="1.300" ry="1.700" fill="#fcd3c5"></ellipse><ellipse cx="25.300" cy="18" rx="1.300" ry="1.700" fill="#fcd3c5"></ellipse><path fill="#fdd6ca" d="M13 14.500c1.800-.5 4.500-1.600 5.800-2.600 1.300 1.600 3.600 2.700 5.100 3v3.600c0 3.400-2.400 6.100-5.450 6.100S13 21.900 13 18.500Z"></path><path fill="#fdd6ca" d="M16.700 23.500h3.800v2.200h-3.800z"></path><ellipse cx="16" cy="17.200" rx=".7" ry="1" fill="#b89a90"></ellipse><ellipse cx="21" cy="17.200" rx=".7" ry="1" fill="#b89a90"></ellipse><path fill="#fb5558" d="M14 26.200h9.200L28.400 31.200H8.800Z"></path><path fill="#2fa190" d="M14.800 24.500c1.100.8 2.400 1.100 3.700 1.100s2.700-.3 3.800-1.100l-.3 2.300c-1 .7-2.200 1-3.500 1s-2.400-.3-3.400-1Z"></path></svg><span class="nm" style="transform: scaleX(0.979); transform-origin: 0px 50%;">Minata CISSE</span></span><span class="td c2"><em style="letter-spacing: 0.76px; margin-right: -0.76px;">+22640000459</em></span><span class="td c3"></span><span class="td c4"><em style="letter-spacing: 0.09px; margin-right: -0.09px;">is1990ta@gmail.com</em></span><span class="td c5"><em style="letter-spacing: 0.54px; margin-right: -0.54px;">10&nbsp;000,00</em></span><span class="td c6"><span class="eye"><svg viewBox="0 0 12 10" fill="none" stroke="#0f70bd"><ellipse cx="6" cy="5" rx="4.800" ry="3.900" stroke-width="1.100"></ellipse><circle cx="6" cy="5" r="1.700" stroke-width="1.300"></circle></svg></span></span></div>
<div class="tr" style="top:426px;height:43px;line-height:42px"><span class="td c1"><svg class="avt" viewBox="7 5 24 28"><path fill="#f48a5c" d="M18.500 6.900c4.800 0 7.800 3.300 7.900 8.200.1 4 .4 8.300.2 11.900H10.500c-.3-3.600 0-7.900.1-11.900.1-4.900 3.100-8.200 7.900-8.200Z"></path><ellipse cx="11.600" cy="18" rx="1.300" ry="1.700" fill="#fcd3c5"></ellipse><ellipse cx="25.300" cy="18" rx="1.300" ry="1.700" fill="#fcd3c5"></ellipse><path fill="#fdd6ca" d="M13 14.500c1.800-.5 4.500-1.600 5.800-2.600 1.300 1.600 3.600 2.700 5.100 3v3.600c0 3.400-2.400 6.100-5.450 6.100S13 21.900 13 18.500Z"></path><path fill="#fdd6ca" d="M16.700 23.500h3.800v2.200h-3.800z"></path><ellipse cx="16" cy="17.200" rx=".7" ry="1" fill="#b89a90"></ellipse><ellipse cx="21" cy="17.200" rx=".7" ry="1" fill="#b89a90"></ellipse><path fill="#fb5558" d="M14 26.200h9.200L28.400 31.200H8.800Z"></path><path fill="#2fa190" d="M14.800 24.500c1.100.8 2.400 1.100 3.700 1.100s2.700-.3 3.800-1.100l-.3 2.300c-1 .7-2.200 1-3.500 1s-2.400-.3-3.400-1Z"></path></svg><span class="nm" style="letter-spacing: -0.09px;">Daouda AKALA</span></span><span class="td c2"><em style="letter-spacing: 0.76px; margin-right: -0.76px;">+22640000330</em></span><span class="td c3"></span><span class="td c4"><em style="letter-spacing: 0.03px; margin-right: -0.03px;">ka1990da@gmail.com</em></span><span class="td c5"><em style="letter-spacing: 0.14px; margin-right: -0.14px;">17&nbsp;500,00</em></span><span class="td c6"><span class="eye"><svg viewBox="0 0 12 10" fill="none" stroke="#0f70bd"><ellipse cx="6" cy="5" rx="4.800" ry="3.900" stroke-width="1.100"></ellipse><circle cx="6" cy="5" r="1.700" stroke-width="1.300"></circle></svg></span></span></div>
</div>
<div id="pager"><svg class="pg" style="left:686px;width:14px" viewBox="0 0 14 10"><path d="M6.300 .7 1.600 5 6.300 9.300M12.600 .7 7.900 5 12.600 9.300"></path></svg><svg class="pg" style="left:737.500px;width:8px" viewBox="0 0 8 10"><path d="M6.300 .7 1.600 5 6.300 9.300"></path></svg><span class="cur">1</span><svg class="pg" style="left:820.500px;width:8px" viewBox="0 0 8 10"><path d="M1.700 .7 6.400 5 1.700 9.300"></path></svg><svg class="pg" style="left:866px;width:14px" viewBox="0 0 14 10"><path d="M1.400 .7 6.100 5 1.400 9.300M7.700 .7 12.400 5 7.700 9.300"></path></svg><span class="per" style="letter-spacing: -0.95px;">20</span><svg class="dn" viewBox="0 0 14 8" fill="none" stroke="#3a3a3a" stroke-width="1.650"><path d="M1 1 7 7 13 1"></path></svg></div>
</div>


</body></html>
